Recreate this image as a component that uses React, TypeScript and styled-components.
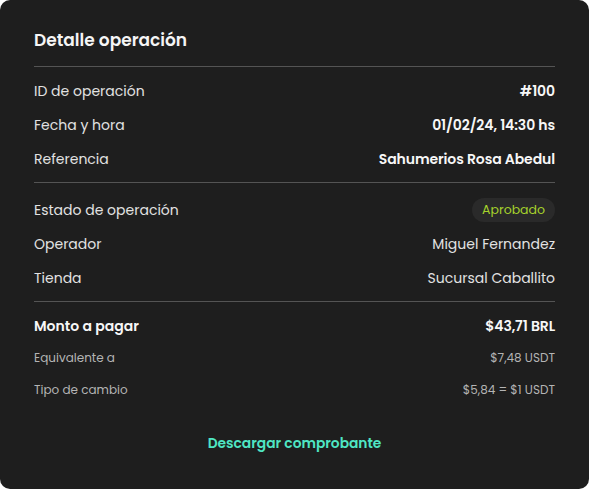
import React from "react";
import styled, { createGlobalStyle } from "styled-components";

const Global = createGlobalStyle`
  html, body { margin: 0; padding: 0; background: #ffffff; }
  body { font-family: "Poppins", "Inter", "Liberation Sans", sans-serif; }
`;

const Card = styled.div`
  width: 589px;
  height: 489px;
  box-sizing: border-box;
  background: #1e1e1e;
  border-radius: 10px;
  padding: 28px 34px 0 34px;
  display: flex;
  flex-direction: column;
`;

const Title = styled.h1`
  margin: 0 0 14px 0;
  font-size: 17px;
  line-height: 24px;
  font-weight: 600;
  color: #f5f5f5;
`;

const Divider = styled.div`
  height: 1px;
  background: #545454;
`;

const Section = styled.div<{ $top: number; $bottom: number }>`
  display: flex;
  flex-direction: column;
  padding-top: ${(p) => p.$top}px;
  padding-bottom: ${(p) => p.$bottom}px;
`;

const Row = styled.div<{ $h: number }>`
  height: ${(p) => p.$h}px;
  display: flex;
  align-items: center;
  justify-content: space-between;
`;

const Label = styled.span<{ $strong?: boolean; $small?: boolean }>`
  font-size: ${(p) => (p.$small ? 12 : 14)}px;
  font-weight: ${(p) => (p.$strong ? 600 : 400)};
  color: ${(p) => (p.$small ? "#b4b4b4" : p.$strong ? "#f7f7f7" : "#e2e2e2")};
`;

const Value = styled.span<{ $strong?: boolean; $small?: boolean }>`
  font-size: ${(p) => (p.$small ? 12 : 14)}px;
  font-weight: ${(p) => (p.$strong ? 600 : 400)};
  letter-spacing: ${(p) => (p.$strong ? "-0.1px" : "0")};
  color: ${(p) => (p.$small ? "#b4b4b4" : p.$strong ? "#f7f7f7" : "#e2e2e2")};
`;

const Badge = styled.span`
  display: inline-flex;
  align-items: center;
  height: 24px;
  padding: 0 10px;
  border-radius: 12px;
  background: #2a2a2a;
  color: #a6d22c;
  font-size: 12.5px;
`;

const Download = styled.button`
  margin-top: 26px;
  align-self: center;
  background: none;
  border: none;
  padding: 0;
  font-family: inherit;
  font-size: 13.8px;
  line-height: 24px;
  font-weight: 600;
  color: #4fe6c4;
  cursor: pointer;
`;

export default function App() {
  return (
    <>
      <Global />
      <Card>
        <Title>Detalle operación</Title>
        <Divider />
        <Section $top={7} $bottom={6}>
          <Row $h={34}>
            <Label>ID de operación</Label>
            <Value $strong>#100</Value>
          </Row>
          <Row $h={34}>
            <Label>Fecha y hora</Label>
            <Value $strong>01/02/24, 14:30 hs</Value>
          </Row>
          <Row $h={34}>
            <Label>Referencia</Label>
            <Value $strong>Sahumerios Rosa Abedul</Value>
          </Row>
        </Section>
        <Divider />
        <Section $top={10} $bottom={6}>
          <Row $h={34}>
            <Label>Estado de operación</Label>
            <Badge>Aprobado</Badge>
          </Row>
          <Row $h={34}>
            <Label>Operador</Label>
            <Value>Miguel Fernandez</Value>
          </Row>
          <Row $h={34}>
            <Label>Tienda</Label>
            <Value>Sucursal Caballito</Value>
          </Row>
        </Section>
        <Divider />
        <Section $top={8} $bottom={0}>
          <Row $h={32}>
            <Label $strong>Monto a pagar</Label>
            <Value $strong>$43,71 BRL</Value>
          </Row>
          <Row $h={32}>
            <Label $small>Equivalente a</Label>
            <Value $small>$7,48 USDT</Value>
          </Row>
          <Row $h={32}>
            <Label $small>Tipo de cambio</Label>
            <Value $small>$5,84 = $1 USDT</Value>
          </Row>
        </Section>
        <Download>Descargar comprobante</Download>
      </Card>
    </>
  );
}
